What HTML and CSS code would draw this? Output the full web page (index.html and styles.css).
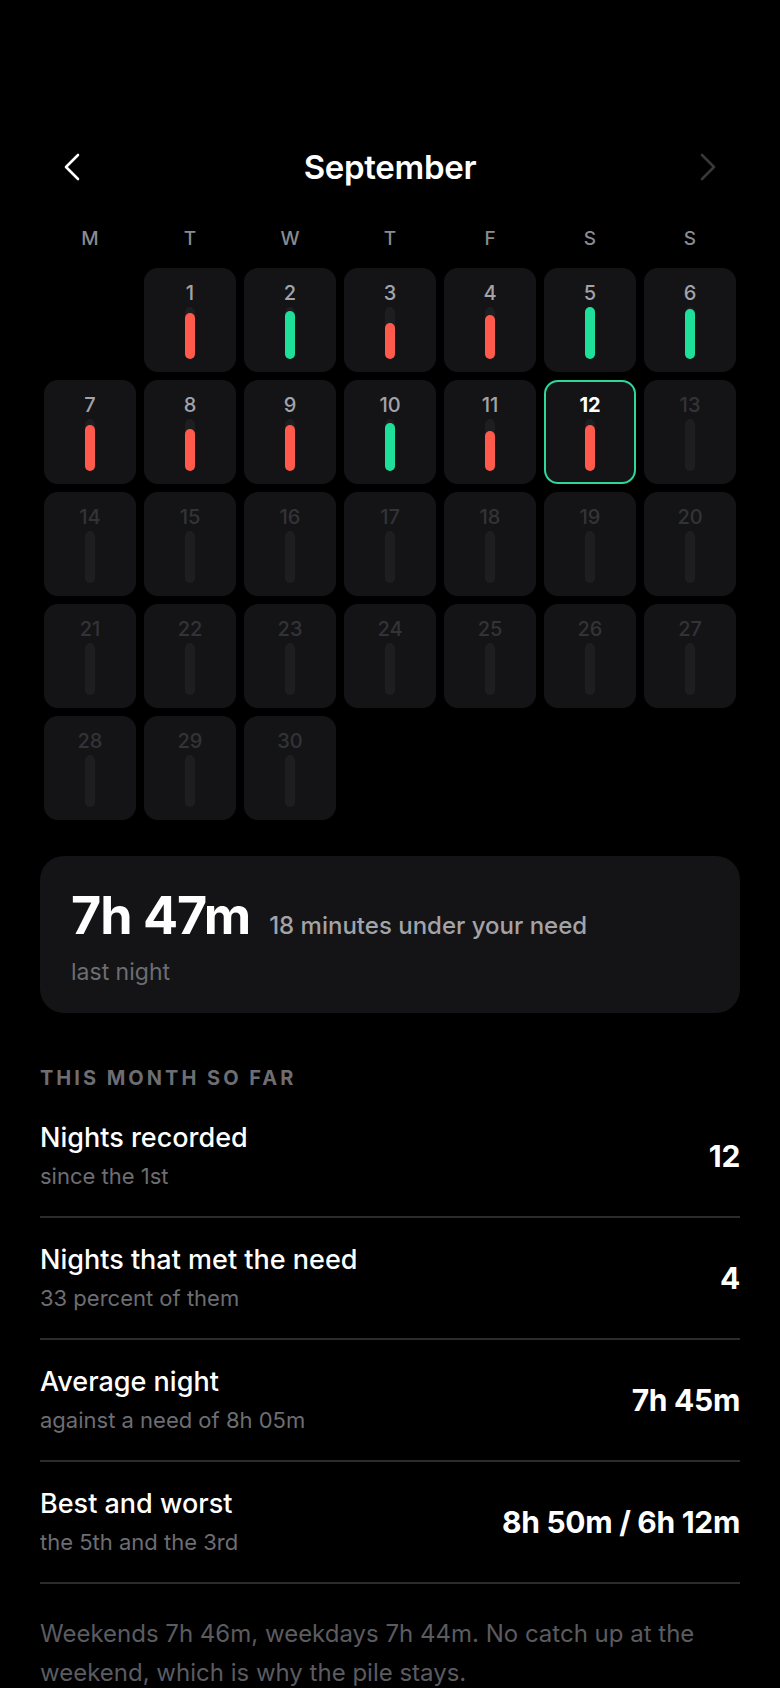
FILE: index.html
```html
<!DOCTYPE html>
<html lang="en">

<head>
    <meta charset="UTF-8">
    <meta name="viewport" content="width=device-width, initial-scale=1.0">
    <title>Sleep - September</title>
    <link rel="stylesheet" href="styles.css">
</head>

<body>
    <div class="page">
        <div class="month-header">
            <button class="nav-btn" aria-label="Previous month">
                <svg width="16" height="28" viewBox="0 0 16 28">
                    <polyline points="14,2 2,14 14,26" fill="none" stroke="currentColor" stroke-width="2.6" stroke-linecap="round" stroke-linejoin="round" />
                </svg>
            </button>
            <h1 class="month-title">September</h1>
            <button class="nav-btn nav-next" aria-label="Next month" disabled>
                <svg width="16" height="28" viewBox="0 0 16 28">
                    <polyline points="2,2 14,14 2,26" fill="none" stroke="currentColor" stroke-width="2.6" stroke-linecap="round" stroke-linejoin="round" />
                </svg>
            </button>
        </div>

        <div class="weekdays">
            <span>M</span>
            <span>T</span>
            <span>W</span>
            <span>T</span>
            <span>F</span>
            <span>S</span>
            <span>S</span>
        </div>

        <div class="calendar" id="calendar"></div>

        <div class="summary-card">
            <div class="summary-main">
                <span class="summary-time">7h 47m</span>
                <span class="summary-note">18 minutes under your need</span>
            </div>
            <div class="summary-label">last night</div>
        </div>

        <h2 class="section-title">This month so far</h2>

        <div class="stats">
            <div class="stat-row">
                <div>
                    <div class="stat-name">Nights recorded</div>
                    <div class="stat-sub">since the 1st</div>
                </div>
                <div class="stat-value">12</div>
            </div>
            <div class="stat-row">
                <div>
                    <div class="stat-name">Nights that met the need</div>
                    <div class="stat-sub">33 percent of them</div>
                </div>
                <div class="stat-value">4</div>
            </div>
            <div class="stat-row">
                <div>
                    <div class="stat-name">Average night</div>
                    <div class="stat-sub">against a need of 8h 05m</div>
                </div>
                <div class="stat-value">7h 45m</div>
            </div>
            <div class="stat-row">
                <div>
                    <div class="stat-name">Best and worst</div>
                    <div class="stat-sub">the 5th and the 3rd</div>
                </div>
                <div class="stat-value">8h 50m / 6h 12m</div>
            </div>
        </div>

        <p class="footnote">Weekends 7h 46m, weekdays 7h 44m. No catch up at the weekend, which is why the pile stays.</p>
    </div>

    <script>
        // minutes slept per night, September so far
        const nights = [466, 489, 372, 448, 530, 510, 466, 425, 466, 486, 408, 467];
        const need = 485;
        const maxMinutes = 530;
        const trackHeight = 52;
        const today = 12;
        const calendar = document.getElementById('calendar');

        // the 1st is a Tuesday, so one blank slot first
        calendar.appendChild(document.createElement('div'));

        for (let day = 1; day <= 30; day++) {
            const cell = document.createElement('div');
            cell.className = 'day';
            if (day > nights.length) cell.classList.add('future');
            if (day === today) cell.classList.add('today');

            const num = document.createElement('div');
            num.className = 'day-num';
            num.textContent = day;
            cell.appendChild(num);

            const track = document.createElement('div');
            track.className = 'track';
            const mins = nights[day - 1];
            if (mins) {
                const fill = document.createElement('div');
                fill.className = mins >= need ? 'fill met' : 'fill short';
                fill.style.height = Math.round(mins / maxMinutes * trackHeight) + 'px';
                track.appendChild(fill);
            }
            cell.appendChild(track);
            calendar.appendChild(cell);
        }
    </script>
</body>

</html>
```

FILE: styles.css
```css
body {
    margin: 0;
    background-color: #000;
    color: #fff;
    font-family: 'Inter', 'Noto Sans', sans-serif;
}

.page {
    padding: 141px 40px 40px;
}

.month-header {
    display: flex;
    justify-content: space-between;
    align-items: center;
    height: 52px;
    padding: 0 24px;
}

.nav-btn {
    background: none;
    border: none;
    padding: 0;
    color: #fff;
    display: flex;
    cursor: pointer;
}

.nav-next {
    color: #38383b;
}

.month-title {
    margin: 0;
    font-size: 33px;
    font-weight: 600;
    letter-spacing: -0.3px;
}

.weekdays,
.calendar {
    display: grid;
    grid-template-columns: repeat(7, 1fr);
    gap: 8px;
    padding: 0 4px;
}

.weekdays {
    margin-top: 34px;
    line-height: 24px;
    font-size: 19px;
    font-weight: 500;
    color: #8b8b90;
    text-align: center;
}

.calendar {
    margin-top: 17px;
}

.day {
    height: 104px;
    box-sizing: border-box;
    background-color: #141416;
    border-radius: 14px;
    display: flex;
    flex-direction: column;
    align-items: center;
    padding-top: 13px;
}

.day-num {
    font-size: 20px;
    font-weight: 500;
    line-height: 24px;
    color: #a3a3a8;
}

.track {
    margin-top: 2px;
    width: 10px;
    height: 52px;
    border-radius: 5px;
    background-color: #1e1e21;
    display: flex;
    flex-direction: column;
    justify-content: flex-end;
}

.fill {
    border-radius: 5px;
}

.fill.short {
    background-color: #ff5a4b;
}

.fill.met {
    background-color: #1fe09b;
}

.day.future .day-num {
    color: #333337;
}

.day.today {
    border: 2px solid #2ed79a;
    padding-top: 11px;
}

.day.today .day-num {
    color: #fff;
    font-weight: 700;
}

.summary-card {
    margin-top: 36px;
    background-color: #141416;
    border-radius: 24px;
    padding: 32px 31px 27px;
}

.summary-main {
    display: flex;
    align-items: baseline;
    gap: 19px;
}

.summary-time {
    font-size: 52px;
    font-weight: 700;
    line-height: 56px;
    letter-spacing: -1px;
}

.summary-note {
    font-size: 24px;
    font-weight: 500;
    color: #a3a3a8;
}

.summary-label {
    margin-top: 14px;
    font-size: 23px;
    line-height: 28px;
    color: #6d6d72;
}

.section-title {
    margin: 53px 0 6px;
    font-size: 20px;
    line-height: 24px;
    font-weight: 700;
    letter-spacing: 3px;
    text-transform: uppercase;
    color: #6d6d72;
}

.stat-row {
    display: flex;
    justify-content: space-between;
    align-items: center;
    padding: 26px 0;
    border-bottom: 2px solid #2c2c30;
}

.stat-name {
    font-size: 27px;
    font-weight: 500;
    line-height: 32px;
}

.stat-sub {
    margin-top: 8px;
    font-size: 22px;
    line-height: 28px;
    color: #6d6d72;
}

.stat-value {
    font-size: 30px;
    font-weight: 700;
    letter-spacing: -0.3px;
}

.footnote {
    margin: 30px 0 0;
    font-size: 24px;
    line-height: 39px;
    color: #5b5b60;
}
```
